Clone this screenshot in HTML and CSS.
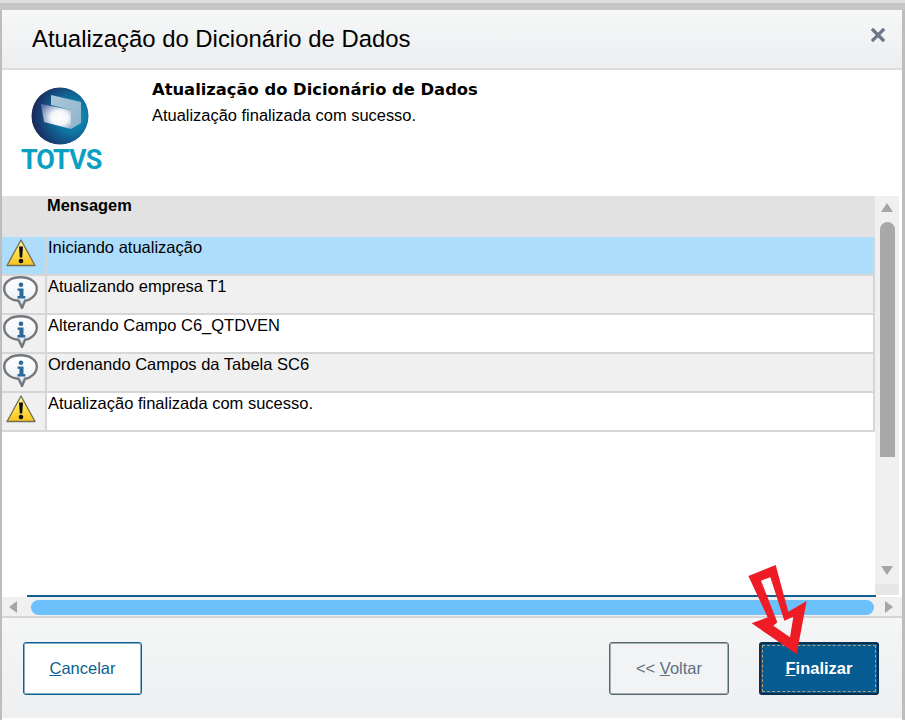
FILE: index.html
```html
<!DOCTYPE html>
<html lang="pt-BR">
<head>
<meta charset="utf-8">
<title>Atualização do Dicionário de Dados</title>
<link rel="stylesheet" href="styles.css">
</head>
<body>
<svg width="0" height="0" class="defs">
  <defs>
    <linearGradient id="warnFill" x1="0" y1="0" x2="0" y2="1">
      <stop offset="0" stop-color="#fff6a8"/><stop offset="0.5" stop-color="#ffe04a"/><stop offset="1" stop-color="#f6c21e"/>
    </linearGradient>
    <linearGradient id="infoFill" x1="0" y1="0" x2="0" y2="1">
      <stop offset="0" stop-color="#ffffff"/><stop offset="0.6" stop-color="#f2f5f8"/><stop offset="1" stop-color="#c4d3e2"/>
    </linearGradient>
    <radialGradient id="globe" cx="0.72" cy="0.5" r="0.8">
      <stop offset="0" stop-color="#0ea0c2"/><stop offset="0.4" stop-color="#0f6f9e"/><stop offset="0.75" stop-color="#173a6e"/><stop offset="1" stop-color="#1f1b4e"/>
    </radialGradient>
    <radialGradient id="glow" cx="0.62" cy="0.55" r="0.7">
      <stop offset="0" stop-color="#ffffff"/><stop offset="0.4" stop-color="#f4f6fa"/><stop offset="1" stop-color="#5f7aa8"/>
    </radialGradient>
    <linearGradient id="pane" x1="0" y1="0" x2="1" y2="1">
      <stop offset="0" stop-color="#a9c8da"/><stop offset="1" stop-color="#8db4cc"/>
    </linearGradient>
    <symbol id="warn" viewBox="0 0 30 28">
      <path d="M15 1 L29 26.5 H1 Z" fill="url(#warnFill)" stroke="#6f6c58" stroke-width="1.3" stroke-linejoin="round"/>
      <path d="M13 7.5 H17 L16.2 18.5 H13.8 Z" fill="#0c0c0c"/>
      <circle cx="15" cy="22" r="2.3" fill="#0c0c0c"/>
    </symbol>
    <symbol id="info" viewBox="0 0 35 33">
      <path d="M17.5 1.3 C27 1.3 33.8 5.8 33.8 12.5 C33.8 19.5 27 24.5 22 24.8 L19 32 L15.6 24.8 C8 24.5 1.2 19.5 1.2 12.5 C1.2 5.8 8 1.3 17.5 1.3 Z" fill="url(#infoFill)" stroke="#74787d" stroke-width="2.4"/>
      <circle cx="18" cy="8.8" r="2.3" fill="#2c6a9c"/>
      <path d="M14.5 12.5 H20.5 V20 H22.3 V22.4 H14.5 V20 H16.4 V14.8 H14.5 Z" fill="#2c6a9c"/>
    </symbol>
  </defs>
</svg>
<div class="top-strip"></div>
<main class="dialog">
  <header class="title-bar">
    <h1 class="title">Atualização do Dicionário de Dados</h1>
    <svg class="close" viewBox="0 0 14 14" width="14" height="14" aria-label="Fechar">
      <path d="M2 2 L12 12 M12 2 L2 12" stroke="#6d7686" stroke-width="3.2" stroke-linecap="square"/>
    </svg>
  </header>
  <section class="hero">
    <div class="logo">
      <svg class="logo-mark" viewBox="0 0 58 58" width="60" height="58">
        <circle cx="29" cy="29" r="28.5" fill="url(#globe)"/>
        <path d="M20 8 L50 15 L50 36 L40 42 L40 23 L20 18 Z" fill="url(#pane)"/>
        <path d="M10 17 L40 23 L40 42 L13 35 Z" fill="url(#glow)"/>
      </svg>
      <span class="logo-text">TOTVS</span>
    </div>
    <div class="hero-text">
      <h2 class="hero-title">Atualização do Dicionário de Dados</h2>
      <p class="hero-sub">Atualização finalizada com sucesso.</p>
    </div>
  </section>
  <section class="grid-area">
    <div class="table">
      <div class="thead"><span class="thead-label">Mensagem</span></div>
      <div class="row selected"><div class="cell-icon"><svg class="ico-warn"><use href="#warn"/></svg></div><div class="cell-text">Iniciando atualização</div></div>
      <div class="row odd"><div class="cell-icon"><svg class="ico-info"><use href="#info"/></svg></div><div class="cell-text">Atualizando empresa T1</div></div>
      <div class="row"><div class="cell-icon"><svg class="ico-info"><use href="#info"/></svg></div><div class="cell-text">Alterando Campo C6_QTDVEN</div></div>
      <div class="row odd"><div class="cell-icon"><svg class="ico-info"><use href="#info"/></svg></div><div class="cell-text">Ordenando Campos da Tabela SC6</div></div>
      <div class="row"><div class="cell-icon"><svg class="ico-warn"><use href="#warn"/></svg></div><div class="cell-text">Atualização finalizada com sucesso.</div></div>
    </div>
    <div class="vscroll">
      <span class="tri tri-up"></span>
      <span class="vthumb"></span>
      <span class="tri tri-down"></span>
      <span class="vscroll-end"></span>
    </div>
  </section>
  <div class="hline"></div>
  <div class="hscroll">
    <span class="tri tri-left"></span>
    <span class="hthumb"></span>
    <span class="tri tri-right"></span>
  </div>
  <footer class="footer">
    <button class="btn btn-cancel"><u>C</u>ancelar</button>
    <div class="spacer"></div>
    <button class="btn btn-back">&lt;&lt; <u>V</u>oltar</button>
    <button class="btn btn-finish"><span class="finish-inner"><span><u>F</u>inalizar</span></span></button>
  </footer>
</main>
<svg class="arrow" viewBox="0 0 210 300" width="70" height="100">
  <path fill-rule="evenodd" fill="#ee1c25" d="M10 48 L92 15 L130 155 L185 123 L155 282 L20 190 L68 172 Z M48 62 L76 52 L118 182 L145 170 L135 232 L85 197 L97 187 Z"/>
</svg>
</body>
</html>
```
FILE: styles.css
```css
* { box-sizing: border-box; }
html, body { margin: 0; padding: 0; }
body {
  width: 905px;
  height: 720px;
  overflow: hidden;
  position: relative;
  background: #bdbdbd;
  font-family: "Liberation Sans", Arial, sans-serif;
  color: #000;
}
.defs { position: absolute; }
.top-strip {
  height: 10px;
  border-top: 3px solid #dedede;
  background: #c6c6c6;
}
.dialog {
  margin: 0 3px 0 2px;
  width: 900px;
  height: 710px;
  background: #fff;
  display: flex;
  flex-direction: column;
}
.title-bar {
  height: 60px;
  flex: none;
  display: flex;
  align-items: center;
  justify-content: space-between;
  padding: 0 17px 2px 30px;
  background: linear-gradient(#f6f7f7, #eceef0);
  border-bottom: 2px solid #dcdcdc;
}
.title { margin: 0; font-size: 23.9px; font-weight: 400; line-height: 28px; padding-top: 2px; }
.close { display: block; margin-top: -7px; }
.hero { height: 126px; flex: none; display: flex; background: #fff; }
.logo { width: 150px; flex: none; padding: 17px 0 0 19px; display: flex; flex-direction: column; align-items: flex-start; }
.logo-mark { display: block; margin-left: 9px; }
.logo-text {
  font-family: Roboto, "Liberation Sans", sans-serif;
  font-weight: 700;
  font-size: 27px;
  line-height: 24px;
  margin-top: 3px;
  color: #0c9fc4;
  letter-spacing: -1px;
}
.hero-text { padding-top: 10px; }
.hero-title { margin: 0; font-family: "DejaVu Sans", sans-serif; font-size: 16.35px; font-weight: 700; line-height: 20px; }
.hero-sub { margin: 6px 0 0; font-size: 16.45px; line-height: 19px; }
.grid-area { height: 399px; flex: none; display: flex; background: #fff; }
.table { width: 873px; flex: none; }
.thead { height: 41px; background: #e2e2e2; padding: 0 0 0 45px; }
.thead-label { font-size: 16.4px; font-weight: 700; line-height: 19px; display: block; }
.row {
  height: 39px;
  display: grid;
  grid-template-columns: 43px 1fr;
  column-gap: 2px;
  border-bottom: 2px solid #d6d6d6;
  border-right: 2px solid #d6d6d6;
  background: #fff;
  font-size: 16.5px;
}
.row.odd { background: #f0f0f0; }
.row.selected { background: #aedcfb; }
.cell-icon { background: #f0f0f0; display: flex; justify-content: flex-start; align-items: flex-start; box-shadow: 2px 0 0 #d6d6d6; }
.selected .cell-icon { background: #aedcfb; }
.cell-text { padding-left: 1px; line-height: 19px; padding-top: 1px; }
.ico-warn { width: 30px; height: 28px; margin: 2px 0 0 4px; display: block; }
.ico-info { width: 35px; height: 33px; margin: 0 0 0 1px; display: block; }
.vscroll {
  width: 24px;
  flex: none;
  background: #f0f0f0;
  display: flex;
  flex-direction: column;
  align-items: center;
  padding-top: 7px;
}
.tri { display: block; width: 0; height: 0; border-style: solid; border-color: transparent; flex: none; }
.tri-up { border-width: 0 6px 9px; border-bottom-color: #a5a5a5; }
.tri-down { border-width: 9px 6px 0; border-top-color: #a5a5a5; margin-top: 109px; }
.tri-left { border-width: 6.5px 8px 6.5px 0; border-right-color: #a5a5a5; }
.tri-right { border-width: 6.5px 0 6.5px 8px; border-left-color: #a5a5a5; }
.vthumb { display: block; width: 15px; height: 235px; margin-top: 10px; background: #a8a8a8; border-radius: 8px 8px 0 0; flex: none; }
.vscroll-end { display: block; width: 100%; flex: 1; margin-top: 9px; background: #e6e6e6; }
.hline { height: 2px; flex: none; margin-left: 25px; width: 849px; background: #0f5f92; }
.hscroll {
  height: 21px;
  flex: none;
  display: flex;
  align-items: center;
  background: #f0f0f0;
  border-bottom: 2px solid #d6d6d6;
  padding: 1px 9px 0 7px;
}
.hthumb { flex: 1; height: 15px; margin: 0 11px 0 14px; background: #6cc1fd; border-radius: 8px; }
.footer {
  flex: 1;
  display: flex;
  align-items: flex-start;
  padding: 24px 23px 0 21px;
  background: linear-gradient(#f4f5f5, #eeeff1);
  margin-bottom: 2px;
}
.spacer { flex: 1; }
.btn {
  height: 53px;
  padding: 0;
  font-family: "Liberation Sans", Arial, sans-serif;
  font-size: 16.5px;
  border-radius: 3px;
  cursor: pointer;
}
.btn-cancel { width: 119px; background: #fff; border: 1px solid #0b5f94; box-shadow: inset 0 0 0 1px rgba(11, 95, 148, 0.5); color: #0b5f94; }
.btn-back { width: 120px; background: #f2f3f4; border: 1px solid #53686f; box-shadow: inset 0 0 0 1px rgba(83, 104, 111, 0.5); color: #5a7182; margin-right: 30px; }
.btn-finish { width: 120px; background: #065b90; border: 2px solid #0b2f4d; color: #fff; font-weight: 700; padding: 1px; }
.finish-inner { display: flex; width: 100%; height: 100%; align-items: center; justify-content: center; border: 1px dashed #b89a78; }
.arrow { position: absolute; left: 745px; top: 560px; display: block; }
```
